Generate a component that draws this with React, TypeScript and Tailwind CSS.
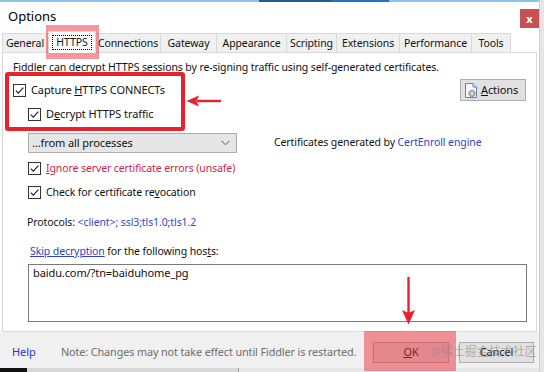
import React from "react";

const font = { fontFamily: '"Noto Sans", "Noto Sans CJK SC", sans-serif' };

const Check = () => (
  <span className="w-[13px] h-[13px] border border-[#333] bg-white flex items-center justify-center shrink-0">
    <svg width="11" height="11" viewBox="0 0 11 11">
      <path d="M1.8 5.6 L4.3 8.1 L9.4 2.6" fill="none" stroke="#222" strokeWidth="1.2" />
    </svg>
  </span>
);

const tabs: [string, number][] = [
  ["General", 46],
  ["HTTPS", 48],
  ["Connections", 66],
  ["Gateway", 57],
  ["Appearance", 71],
  ["Scripting", 51],
  ["Extensions", 64],
  ["Performance", 73],
  ["Tools", 40],
];

export default function App() {
  return (
    <div
      className="relative w-[544px] h-[372px] overflow-hidden bg-white flex text-[10.5px] tracking-[-0.1px] text-[#111]"
      style={font}
    >
      <div className="w-[539px] flex flex-col">
        <div className="h-[2px] flex">
          <div className="w-[259px] bg-[#8cc3ea]" />
          <div className="w-[72px] bg-[#2a5a8a]" />
          <div className="w-[58px] bg-[#1f74c4]" />
          <div className="flex-1 bg-[#8cc3ea]" />
        </div>
        <div className="h-[29px] flex items-start justify-between">
          <span className="pl-[8px] pt-[6px] text-[13px] tracking-normal text-black leading-[16px]">Options</span>
          <div className="mt-[7px] w-[19px] h-[19px] bg-[#c75050] text-white flex items-center justify-center text-[11px] font-bold leading-none">
            x
          </div>
        </div>
        <div className="h-[21px] flex items-end pl-[2px]">
          {tabs.map(([t, w]) =>
            t === "HTTPS" ? (
              <div
                key={t}
                style={{ width: w }}
                className="relative z-10 h-[22px] -mb-px bg-white border border-b-0 border-[#d9d9d9] flex items-center justify-center"
              >
                <span className="border border-dotted border-black px-[3px] leading-[13px]">{t}</span>
              </div>
            ) : (
              <div
                key={t}
                style={{ width: w }}
                className="h-[19px] bg-[#f0f0f0] border border-b-0 border-[#d9d9d9] -ml-px first:ml-0 flex items-center justify-center leading-none"
              >
                {t}
              </div>
            )
          )}
        </div>
        <div className="mx-[2px] h-[280px] border border-[#d9d9d9] bg-white flex flex-col pl-[10px]">
          <div className="mt-[7px] h-[14px] leading-[14px]">
            Fiddler can decrypt HTTPS sessions by re-signing traffic using self-generated certificates.
          </div>
          <div className="mt-[5px] h-[22px] flex items-center justify-between pr-[10px]">
            <div className="flex items-center gap-[5px]">
              <Check />
              <span className="text-[11px]">
                Capture <span className="underline">H</span>TTPS CONNECTs
              </span>
            </div>
            <div className="w-[66px] h-[22px] bg-[#e1e1e1] border border-[#adadad] flex items-center pl-[2px] gap-[1px]">
              <svg width="17" height="17" viewBox="0 0 17 17">
                <path d="M2.5 1.5 H10 L13.5 5 V15.5 H2.5 Z" fill="#f4f8fc" stroke="#5b88b8" strokeWidth="1" />
                <path d="M10 1.5 V5 H13.5" fill="#dfe9f4" stroke="#5b88b8" strokeWidth="1" />
                <circle cx="9" cy="11.5" r="3.2" fill="#b8b8b8" stroke="#6e6e6e" strokeWidth="1" strokeDasharray="1.2 0.8" />
                <circle cx="9" cy="11.5" r="1.1" fill="#f4f4f4" />
              </svg>
              <span className="text-[11px]">
                <span className="underline">A</span>ctions
              </span>
            </div>
          </div>
          <div className="mt-[4px] h-[19px] flex items-center gap-[5px] pl-[15px]">
            <Check />
            <span className="text-[11px]">
              D<span className="underline">e</span>crypt HTTPS traffic
            </span>
          </div>
          <div className="mt-[9px] h-[20px] flex items-center pl-[15px]">
            <div className="w-[209px] h-[20px] bg-[#e6e6e6] border border-[#acacac] flex items-center justify-between pl-[3px] pr-[6px]">
              <span className="text-[11px]">…from all processes</span>
              <svg width="9" height="6" viewBox="0 0 9 6">
                <path d="M0.5 0.8 L4.5 4.8 L8.5 0.8" fill="none" stroke="#555" strokeWidth="1" />
              </svg>
            </div>
            <span className="ml-[37px]">
              Certificates generated by <span className="text-[#2e45c4]">CertEnroll engine</span>
            </span>
          </div>
          <div className="mt-[6px] h-[19px] flex items-center gap-[5px] pl-[15px]">
            <Check />
            <span className="text-[#d0234c]">
              <span className="underline">I</span>gnore server certificate errors (unsafe)
            </span>
          </div>
          <div className="mt-[5px] h-[19px] flex items-center gap-[5px] pl-[15px]">
            <Check />
            <span>
              Check for certificate re<span className="underline">v</span>ocation
            </span>
          </div>
          <div className="mt-[13px] h-[16px] flex items-center pl-[14px]">
            <span>
              Protocols: <span className="text-[#3346cc]">&lt;client&gt;; ssl3;tls1.0;tls1.2</span>
            </span>
          </div>
          <div className="mt-[13px] h-[16px] flex items-center pl-[17px]">
            <span>
              <span className="text-[#2e3fc8] underline">Skip decryption</span> for the following hos
              <span className="underline">t</span>s:
            </span>
          </div>
          <div className="mt-[4px] ml-[15px] w-[499px] h-[58px] border border-[#7a7a7a] bg-white pl-[4px] pt-[1px] leading-[14px] text-[11px]">
            baidu.com/?tn=baiduhome_pg
          </div>
        </div>
        <div className="h-[36px] bg-[#f0f0f0] flex items-center pt-[4px]">
          <span className="pl-[12px] text-[#2a35c8] w-[61px] text-[11px]">Help</span>
          <span className="text-[#6d6d6d] w-[312px] text-[10.8px]">
            Note: Changes may not take effect until Fiddler is restarted.
          </span>
          <div className="w-[76px] h-[21px] bg-[#e1e1e1] border border-[#adadad] flex items-center justify-center text-[11px]">
            <span>
              <span className="underline">O</span>K
            </span>
          </div>
          <div className="ml-[10px] w-[75px] h-[21px] bg-[#e1e1e1] border border-[#adadad] flex items-center justify-center text-[11px]">
            Cancel
          </div>
        </div>
        <div className="h-[4px] flex">
          <div className="w-[27px] bg-[#111]" />
          <div className="w-[212px] bg-[#d8d8d8] border-r border-[#9a9a9a]" />
          <div className="flex-1 bg-[#e8e8e8]" />
        </div>
      </div>
      <div className="w-[5px] bg-[#e6e6e6] border-l border-[#cdcdcd]" />

      {/* overlays */}
      <div className="absolute left-[46px] top-[25px] w-[53px] h-[34px] bg-[#e8303c]/50" />
      <div className="absolute left-[364px] top-[331px] w-[92px] h-[40px] bg-[#e8303c]/50" />
      <div className="absolute left-[5px] top-[72px] w-[180px] h-[59px] border-[4px] border-[#e8212b] rounded-[3px]" />
      <svg className="absolute left-[185px] top-[94px]" width="38" height="14" viewBox="0 0 38 14">
        <path d="M12 5.8 H36 V8.2 H12 Z" fill="#e8212b" />
        <path d="M1.5 7 L14 1.5 L11.5 7 L14 12.5 Z" fill="#e8212b" />
      </svg>
      <svg className="absolute left-[401px] top-[276px]" width="15" height="50" viewBox="0 0 15 50">
        <path d="M6.3 1 H8.7 V38 H6.3 Z" fill="#e8212b" />
        <path d="M7.5 48.5 L1 34 L7.5 37 L14 34 Z" fill="#e8212b" />
      </svg>
      <div className="absolute left-[430px] top-[344px] text-[12px] leading-[16px] tracking-normal text-[#8a8a8a]/60" style={font}>
        @稀土掘金技术社区
      </div>
    </div>
  );
}
